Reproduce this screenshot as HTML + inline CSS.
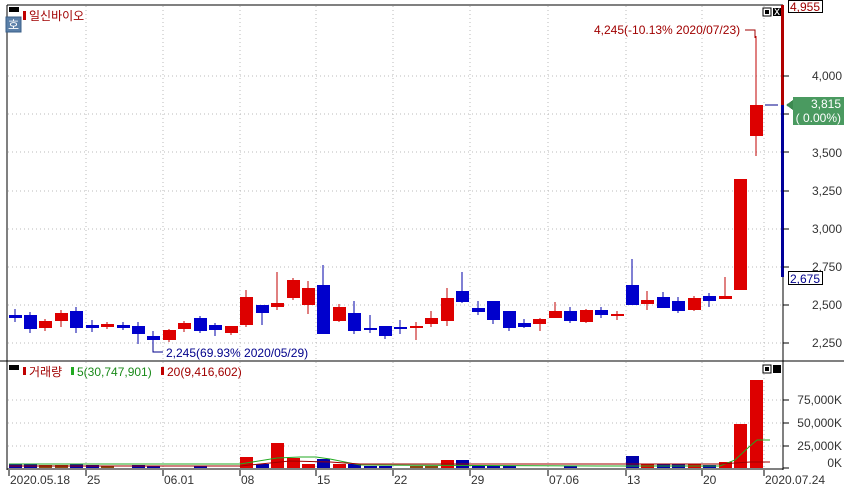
<!DOCTYPE html>
<html><head><meta charset="utf-8"><style>
body{margin:0;background:#fff;width:844px;height:488px;overflow:hidden}
svg{display:block}
text{font-family:"Liberation Sans","Noto Sans CJK KR","NanumGothic",sans-serif;font-size:12px}
.ax{fill:#333;font-size:12px}
</style></head><body>
<svg width="844" height="488" viewBox="0 0 844 488" xmlns="http://www.w3.org/2000/svg" shape-rendering="crispEdges">
<rect width="844" height="488" fill="#fff"/>
<!-- grid -->
<g stroke="#bbb" stroke-dasharray="1,3">
<line x1="86" y1="6" x2="86" y2="468"/><line x1="163" y1="6" x2="163" y2="468"/><line x1="240" y1="6" x2="240" y2="468"/><line x1="316" y1="6" x2="316" y2="468"/><line x1="393" y1="6" x2="393" y2="468"/><line x1="470" y1="6" x2="470" y2="468"/><line x1="548" y1="6" x2="548" y2="468"/><line x1="626" y1="6" x2="626" y2="468"/><line x1="702" y1="6" x2="702" y2="468"/><line x1="764" y1="6" x2="764" y2="468"/>
<line x1="8" y1="76" x2="782" y2="76"/><line x1="8" y1="114" x2="782" y2="114"/><line x1="8" y1="152" x2="782" y2="152"/><line x1="8" y1="191" x2="782" y2="191"/><line x1="8" y1="229" x2="782" y2="229"/><line x1="8" y1="267" x2="782" y2="267"/><line x1="8" y1="305" x2="782" y2="305"/><line x1="8" y1="343" x2="782" y2="343"/>
<line x1="8" y1="400" x2="782" y2="400"/><line x1="8" y1="423" x2="782" y2="423"/><line x1="8" y1="446" x2="782" y2="446"/>
</g>
<!-- frame -->
<g stroke="#000" fill="none">
<line x1="7" y1="5" x2="783" y2="5"/><line x1="7" y1="5" x2="7" y2="470"/>
<line x1="783" y1="5" x2="783" y2="470"/><line x1="0" y1="361" x2="844" y2="361"/>
<line x1="7" y1="469" x2="783" y2="469"/>
</g>
<!-- wicks -->
<g stroke-width="1">
<g stroke="#0000aa">
<line x1="15" y1="309" x2="15" y2="322"/><line x1="30" y1="312" x2="30" y2="333"/><line x1="76" y1="307" x2="76" y2="333"/><line x1="92" y1="320" x2="92" y2="332"/><line x1="123" y1="322" x2="123" y2="330"/><line x1="138" y1="322" x2="138" y2="344"/><line x1="153" y1="331" x2="153" y2="347"/><line x1="200" y1="316" x2="200" y2="333"/><line x1="215" y1="323" x2="215" y2="336"/><line x1="262" y1="305" x2="262" y2="325"/><line x1="323" y1="265" x2="323" y2="334"/><line x1="354" y1="301" x2="354" y2="334"/><line x1="370" y1="315" x2="370" y2="333"/><line x1="385" y1="326" x2="385" y2="339"/><line x1="400" y1="320" x2="400" y2="334"/><line x1="462" y1="272" x2="462" y2="303"/><line x1="478" y1="301" x2="478" y2="315"/><line x1="493" y1="301" x2="493" y2="324"/><line x1="509" y1="311" x2="509" y2="331"/><line x1="524" y1="319" x2="524" y2="328"/><line x1="570" y1="307" x2="570" y2="323"/><line x1="601" y1="307" x2="601" y2="318"/><line x1="632" y1="259" x2="632" y2="305"/><line x1="663" y1="292" x2="663" y2="308"/><line x1="678" y1="297" x2="678" y2="313"/><line x1="709" y1="293" x2="709" y2="307"/>
</g>
<g stroke="#c00000">
<line x1="45" y1="319" x2="45" y2="331"/><line x1="61" y1="310" x2="61" y2="327"/><line x1="107" y1="322" x2="107" y2="329"/><line x1="169" y1="329" x2="169" y2="342"/><line x1="184" y1="321" x2="184" y2="332"/><line x1="231" y1="326" x2="231" y2="335"/><line x1="246" y1="290" x2="246" y2="327"/><line x1="277" y1="272" x2="277" y2="310"/><line x1="293" y1="278" x2="293" y2="300"/><line x1="308" y1="281" x2="308" y2="314"/><line x1="339" y1="304" x2="339" y2="322"/><line x1="416" y1="322" x2="416" y2="340"/><line x1="431" y1="311" x2="431" y2="327"/><line x1="447" y1="288" x2="447" y2="326"/><line x1="540" y1="318" x2="540" y2="331"/><line x1="555" y1="302" x2="555" y2="318"/><line x1="586" y1="309" x2="586" y2="323"/><line x1="617" y1="311" x2="617" y2="320"/><line x1="647" y1="291" x2="647" y2="310"/><line x1="694" y1="296" x2="694" y2="311"/><line x1="725" y1="277" x2="725" y2="298"/><line x1="756" y1="36" x2="756" y2="156"/>
</g>
</g>
<!-- bodies -->
<g fill="#0000cc">
<rect x="9" y="315" width="13" height="3"/><rect x="24" y="315" width="13" height="14"/><rect x="70" y="311" width="13" height="17"/><rect x="86" y="325" width="13" height="3"/><rect x="117" y="325" width="13" height="3"/><rect x="132" y="326" width="13" height="8"/><rect x="147" y="336" width="13" height="4"/><rect x="194" y="318" width="13" height="13"/><rect x="209" y="325" width="13" height="5"/><rect x="256" y="305" width="13" height="8"/><rect x="317" y="285" width="13" height="49"/><rect x="348" y="313" width="13" height="18"/><rect x="364" y="328" width="13" height="2"/><rect x="379" y="326" width="13" height="10"/><rect x="394" y="327" width="13" height="2"/><rect x="456" y="291" width="13" height="11"/><rect x="472" y="308" width="13" height="4"/><rect x="487" y="301" width="13" height="19"/><rect x="503" y="311" width="13" height="17"/><rect x="518" y="323" width="13" height="4"/><rect x="564" y="311" width="13" height="10"/><rect x="595" y="310" width="13" height="5"/><rect x="626" y="285" width="13" height="20"/><rect x="657" y="297" width="13" height="11"/><rect x="672" y="301" width="13" height="10"/><rect x="703" y="296" width="13" height="5"/>
</g>
<g fill="#dd0000">
<rect x="39" y="321" width="13" height="7"/><rect x="55" y="313" width="13" height="8"/><rect x="101" y="324" width="13" height="3"/><rect x="163" y="330" width="13" height="10"/><rect x="178" y="323" width="13" height="6"/><rect x="225" y="326" width="13" height="7"/><rect x="240" y="297" width="13" height="28"/><rect x="271" y="303" width="13" height="4"/><rect x="287" y="280" width="13" height="18"/><rect x="302" y="288" width="13" height="17"/><rect x="333" y="307" width="13" height="14"/><rect x="410" y="326" width="13" height="2"/><rect x="425" y="318" width="13" height="6"/><rect x="441" y="298" width="13" height="23"/><rect x="533" y="319" width="13" height="5"/><rect x="549" y="311" width="13" height="7"/><rect x="580" y="310" width="13" height="12"/><rect x="611" y="314" width="13" height="2"/><rect x="641" y="300" width="13" height="4"/><rect x="688" y="298" width="13" height="12"/><rect x="719" y="296" width="13" height="3"/><rect x="734" y="179" width="13" height="111"/><rect x="750" y="105" width="13" height="31"/>
</g>
<!-- annotations -->
<g stroke="#00008b" fill="none"><polyline points="153,344 153,352 163,352"/></g>
<text x="166" y="357" fill="#00008b">2,245(69.93% 2020/05/29)</text>
<text x="594" y="34" fill="#a00000">4,245(-10.13% 2020/07/23)</text>
<g stroke="#a00000" fill="none"><polyline points="745,30 755,30 755,38"/></g>
<line x1="765" y1="105" x2="778" y2="105" stroke="#00008b"/>
<!-- right axis -->
<rect x="781" y="5" width="3" height="100" fill="#b00000"/>
<rect x="781" y="105" width="3" height="172" fill="#000099"/>
<g stroke="#000"><line x1="783" y1="76" x2="789" y2="76"/><line x1="783" y1="114" x2="789" y2="114"/><line x1="783" y1="152" x2="789" y2="152"/><line x1="783" y1="191" x2="789" y2="191"/><line x1="783" y1="229" x2="789" y2="229"/><line x1="783" y1="267" x2="789" y2="267"/><line x1="783" y1="305" x2="789" y2="305"/><line x1="783" y1="343" x2="789" y2="343"/>
<line x1="783" y1="400" x2="789" y2="400"/><line x1="783" y1="423" x2="789" y2="423"/><line x1="783" y1="446" x2="789" y2="446"/><line x1="783" y1="468" x2="789" y2="468"/></g>
<g class="ax" text-anchor="end">
<text x="842" y="80">4,000</text><text x="842" y="157">3,500</text><text x="842" y="195">3,250</text><text x="842" y="233">3,000</text><text x="842" y="271">2,750</text><text x="842" y="309">2,500</text><text x="842" y="347">2,250</text>
<text x="842" y="404">75,000K</text><text x="842" y="427">50,000K</text><text x="842" y="450">25,000K</text><text x="842" y="467">0K</text>
</g>
<rect x="788.5" y="0.5" width="34" height="12" fill="#fff" stroke="#000"/>
<text x="790" y="11" fill="#a00000">4,955</text>
<polygon points="786,105 793,100 793,110" fill="#3c8a50"/>
<rect x="793" y="97" width="51" height="28" fill="#4a9a60"/>
<text x="841" y="108" fill="#fff" text-anchor="end">3,815</text>
<text x="841" y="122" fill="#fff" text-anchor="end">( 0.00%)</text>
<rect x="788.5" y="271.5" width="34" height="13" fill="#fff" stroke="#000"/>
<text x="790" y="283" fill="#00008b">2,675</text>
<!-- header -->
<rect x="9" y="7" width="10" height="5" fill="#000"/>
<rect x="23" y="11" width="3" height="9" fill="#c00000"/>
<text x="29" y="20" fill="#a00000" font-size="13">일신바이오</text>
<rect x="6" y="17" width="15" height="15" fill="#5a7fa8" stroke="#3a5f88"/>
<text x="8" y="29" fill="#fff" font-size="11">호</text>
<rect x="763" y="8" width="8" height="8" fill="#fff" stroke="#000"/><rect x="765" y="10" width="4" height="4" fill="#000"/>
<rect x="773" y="8" width="8" height="8" fill="#000"/><text x="774" y="15" fill="#fff" font-size="8">x</text>
<rect x="763" y="365" width="8" height="8" fill="#fff" stroke="#000"/><rect x="765" y="367" width="4" height="4" fill="#000"/>
<rect x="773" y="365" width="8" height="8" fill="#000"/>
<!-- volume header -->
<rect x="9" y="365" width="10" height="5" fill="#000"/>
<rect x="23" y="367" width="3" height="8" fill="#c00000"/>
<text x="29" y="376" fill="#a00000">거래량</text>
<rect x="71" y="367" width="3" height="8" fill="#22aa22"/>
<text x="77" y="376" fill="#1a8a1a">5(30,747,901)</text>
<rect x="161" y="367" width="3" height="8" fill="#c00000"/>
<text x="167" y="376" fill="#a00000">20(9,416,602)</text>
<!-- volume bars -->
<g fill="#0000aa">
<rect x="9" y="464" width="13" height="4"/><rect x="24" y="464" width="13" height="4"/><rect x="70" y="464" width="13" height="4"/><rect x="86" y="465" width="13" height="3"/><rect x="132" y="465" width="13" height="3"/><rect x="147" y="466" width="13" height="2"/><rect x="194" y="466" width="13" height="2"/><rect x="256" y="464" width="13" height="4"/><rect x="317" y="459" width="13" height="9"/><rect x="348" y="464" width="13" height="4"/><rect x="364" y="466" width="13" height="2"/><rect x="379" y="466" width="13" height="2"/><rect x="456" y="460" width="13" height="8"/><rect x="472" y="466" width="13" height="2"/><rect x="487" y="466" width="13" height="2"/><rect x="503" y="466" width="13" height="2"/><rect x="564" y="466" width="13" height="2"/><rect x="626" y="456" width="13" height="12"/><rect x="657" y="464" width="13" height="4"/><rect x="672" y="464" width="13" height="4"/><rect x="703" y="465" width="13" height="3"/>
</g>
<g fill="#8a4a10"><rect x="39" y="465" width="13" height="3"/><rect x="55" y="465" width="13" height="3"/><rect x="101" y="466" width="13" height="2"/><rect x="410" y="466" width="13" height="2"/><rect x="425" y="466" width="13" height="2"/></g>
<g fill="#dd0000">
<rect x="240" y="457" width="13" height="11"/><rect x="271" y="443" width="13" height="25"/><rect x="287" y="458" width="13" height="10"/><rect x="302" y="464" width="13" height="4"/><rect x="333" y="464" width="13" height="4"/><rect x="441" y="460" width="13" height="8"/><rect x="641" y="464" width="13" height="4"/><rect x="688" y="464" width="13" height="4"/><rect x="719" y="462" width="13" height="6"/><rect x="734" y="424" width="13" height="44"/><rect x="750" y="380" width="13" height="88"/>
</g>
<g fill="none" shape-rendering="auto">
<polyline points="9,464 240,464 277,458 300,457 316,457 330,459 360,465 600,466 720,466 735,460 750,446 757,440 770,440" stroke="#22aa22"/>
<polyline points="9,466 240,466 290,461 330,462 360,464 720,464 750,462 770,462" stroke="#a00000"/>
</g>
<!-- date axis -->
<g stroke="#000"><line x1="9" y1="470" x2="9" y2="476"/><line x1="86" y1="470" x2="86" y2="476"/><line x1="163" y1="470" x2="163" y2="476"/><line x1="240" y1="470" x2="240" y2="476"/><line x1="316" y1="470" x2="316" y2="476"/><line x1="393" y1="470" x2="393" y2="476"/><line x1="470" y1="470" x2="470" y2="476"/><line x1="548" y1="470" x2="548" y2="476"/><line x1="626" y1="470" x2="626" y2="476"/><line x1="702" y1="470" x2="702" y2="476"/><line x1="764" y1="470" x2="764" y2="476"/></g>
<g class="ax">
<text x="10" y="484">2020.05.18</text><text x="87" y="484">25</text><text x="164" y="484">06.01</text><text x="241" y="484">08</text><text x="317" y="484">15</text><text x="394" y="484">22</text><text x="471" y="484">29</text><text x="549" y="484">07.06</text><text x="627" y="484">13</text><text x="703" y="484">20</text><text x="765" y="484">2020.07.24</text>
</g>
</svg>
</body></html>
